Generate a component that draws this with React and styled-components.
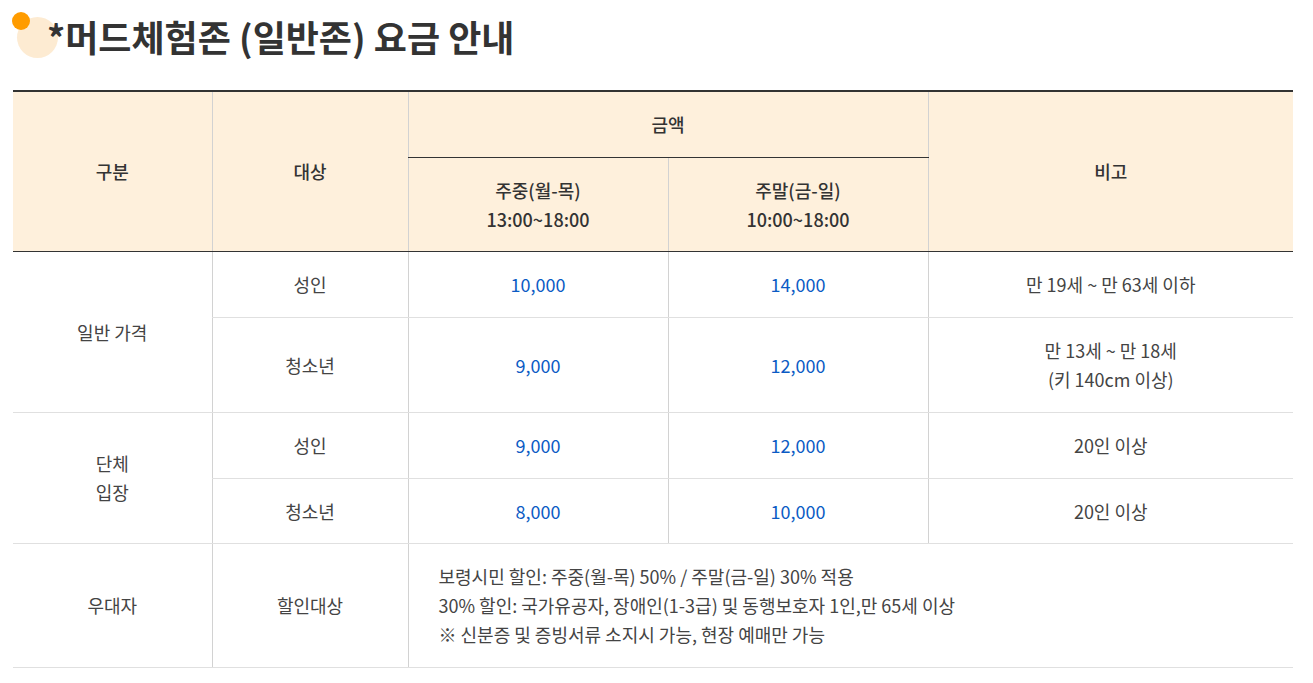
import React from "react";
import styled, { createGlobalStyle } from "styled-components";

const Global = createGlobalStyle`
  html, body { margin: 0; padding: 0; background: #fff; }
  body { font-family: "Noto Sans CJK KR", "Noto Sans", sans-serif; color: #444; }
`;

const Page = styled.div`
  padding: 0 20px 0 13px;
`;

const Title = styled.h2`
  position: relative;
  margin: 0;
  padding: 13px 0 0 34px;
  height: 73px;
  box-sizing: border-box;
  font-size: 36px;
  font-weight: 700;
  color: #333;
  line-height: 1.3;
  z-index: 0;
  &::before {
    content: "";
    position: absolute;
    left: 4px;
    top: 17px;
    width: 41px;
    height: 41px;
    border-radius: 50%;
    background: #fdebd2;
    z-index: -1;
  }
  &::after {
    content: "";
    position: absolute;
    left: -1px;
    top: 12px;
    width: 18px;
    height: 18px;
    border-radius: 50%;
    background: #ff9c00;
  }
`;

const Table = styled.table`
  width: 1280px;
  border-collapse: collapse;
  table-layout: fixed;
  font-size: 18px;
  line-height: 1.6;
  border-top: 2px solid #333;
  margin-top: 17px;
`;

const Th = styled.th`
  background: #fef0dc;
  color: #333;
  font-weight: 500;
  padding: 18px 10px;
  text-align: center;
  border-left: ${(p) => (p.$first ? "none" : "1px solid #d2d2d2")};
  border-bottom: 1px solid #333;
`;

const Td = styled.td`
  padding: 18px 10px;
  text-align: ${(p) => (p.$left ? "left" : "center")};
  padding-left: ${(p) => (p.$left ? "30px" : "10px")};
  color: ${(p) => (p.$price ? "#0b5bc4" : "#444")};
  border-left: ${(p) => (p.$first ? "none" : "1px solid #d2d2d2")};
  border-bottom: 1px solid #e0e0e0;
  vertical-align: middle;
`;

const rows = [
  { group: ["일반 가격"], span: 2, who: "성인", wk: "10,000", we: "14,000", note: ["만 19세 ~ 만 63세 이하"] },
  { who: "청소년", wk: "9,000", we: "12,000", note: ["만 13세 ~ 만 18세", "(키 140cm 이상)"] },
  { group: ["단체", "입장"], span: 2, who: "성인", wk: "9,000", we: "12,000", note: ["20인 이상"] },
  { who: "청소년", wk: "8,000", we: "10,000", note: ["20인 이상"] },
];

const Lines = ({ items }) =>
  items.map((t, i) => (
    <React.Fragment key={i}>
      {i > 0 && <br />}
      {t}
    </React.Fragment>
  ));

export default function App() {
  return (
    <>
      <Global />
      <Page>
        <Title>*머드체험존 (일반존) 요금 안내</Title>
        <Table>
          <colgroup>
            <col style={{ width: 199 }} />
            <col style={{ width: 196 }} />
            <col style={{ width: 260 }} />
            <col style={{ width: 260 }} />
            <col />
          </colgroup>
          <thead>
            <tr>
              <Th rowSpan={2} $first>구분</Th>
              <Th rowSpan={2}>대상</Th>
              <Th colSpan={2}>금액</Th>
              <Th rowSpan={2}>비고</Th>
            </tr>
            <tr>
              <Th>주중(월-목)<br />13:00~18:00</Th>
              <Th>주말(금-일)<br />10:00~18:00</Th>
            </tr>
          </thead>
          <tbody>
            {rows.map((r, i) => (
              <tr key={i}>
                {r.group && (
                  <Td rowSpan={r.span} $first>
                    <Lines items={r.group} />
                  </Td>
                )}
                <Td>{r.who}</Td>
                <Td $price>{r.wk}</Td>
                <Td $price>{r.we}</Td>
                <Td><Lines items={r.note} /></Td>
              </tr>
            ))}
            <tr>
              <Td $first>우대자</Td>
              <Td>할인대상</Td>
              <Td colSpan={3} $left>
                보령시민 할인: 주중(월-목) 50% / 주말(금-일) 30% 적용<br />
                30% 할인: 국가유공자, 장애인(1-3급) 및 동행보호자 1인,만 65세 이상<br />
                ※ 신분증 및 증빙서류 소지시 가능, 현장 예매만 가능
              </Td>
            </tr>
          </tbody>
        </Table>
      </Page>
    </>
  );
}
